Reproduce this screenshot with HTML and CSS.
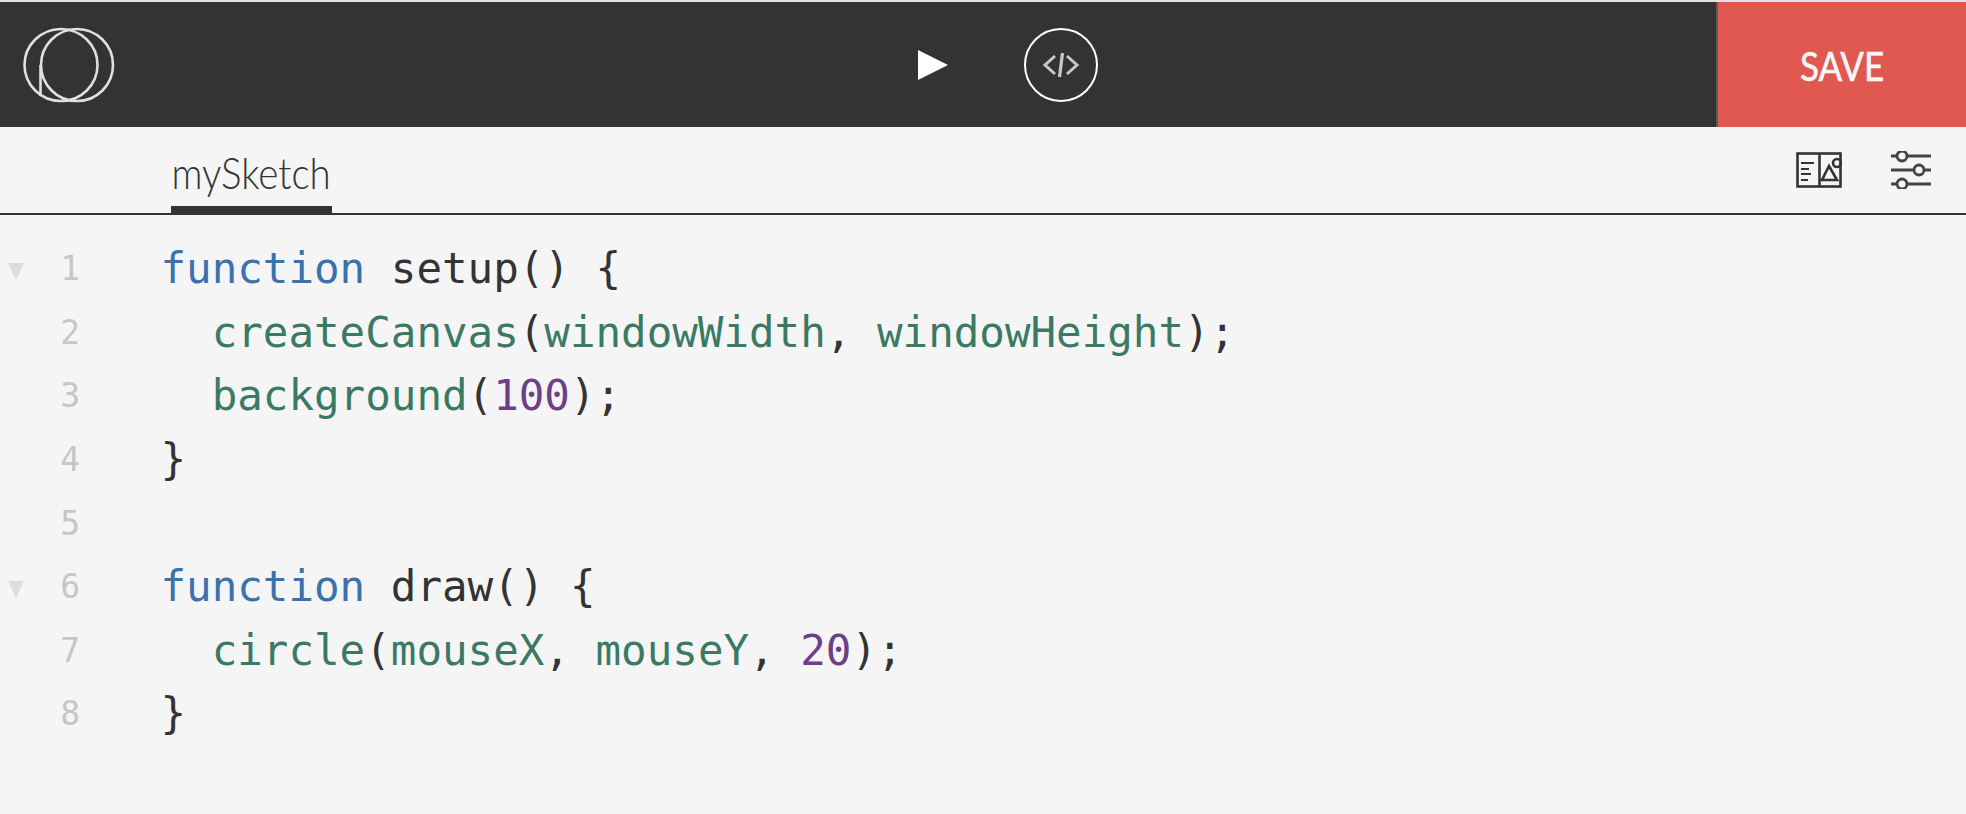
FILE: index.html
```html
<!DOCTYPE html>
<html lang="en">
<head>
<meta charset="utf-8">
<title>mySketch</title>
<link rel="stylesheet" href="styles.css">
</head>
<body>
<header class="topbar">
  <svg class="logo" width="92" height="76" viewBox="0 0 92 76" fill="none" stroke="#e0e0e0" stroke-width="2.6">
    <ellipse cx="38" cy="38" rx="36.5" ry="36"/>
    <ellipse cx="54" cy="38" rx="36" ry="36"/>
    <path d="M17.5 69V38"/>
  </svg>
  <div class="controls">
    <svg class="play" width="30" height="30" viewBox="0 0 30 30"><path d="M0 0L30 15L0 30Z" fill="#fff"/></svg>
    <div class="code-btn">
      <svg width="38" height="26" viewBox="0 0 38 26" fill="none" stroke="#c8c8c8" stroke-width="3">
        <path d="M13 4L3 13L13 22M25 4L35 13L25 22"/>
        <path d="M20.5 1L17.5 25" stroke-width="3.2"/>
      </svg>
    </div>
  </div>
  <button class="save"><span class="squeeze">SAVE</span></button>
</header>
<nav class="tabs">
  <div class="tab"><span class="squeeze">mySketch</span></div>
  <div class="tab-icons">
    <svg width="46" height="36" viewBox="0 0 46 36" fill="none" stroke="#333" stroke-width="2.6">
      <rect x="1.5" y="1.5" width="43" height="33"/>
      <path d="M23.5 1.5V34.5"/>
      <path d="M5 11H18M5 17H13M5 22H15M5 28H12" stroke-width="2.2"/>
      <path d="M33 14L41 28H26Z"/>
      <circle cx="41" cy="11" r="4"/>
    </svg>
    <svg width="40" height="38" viewBox="0 0 40 38" fill="none" stroke="#444" stroke-width="2.8">
      <path d="M0 5H6M16 5H40M0 19H23M33 19H40M0 33H6M16 33H40"/>
      <circle cx="11" cy="5" r="5"/>
      <circle cx="28" cy="19" r="5"/>
      <circle cx="11" cy="33" r="5"/>
    </svg>
  </div>
</nav>
<main class="editor">
  <div class="line"><span class="fold"></span><span class="num">1</span><code><span class="kw">function</span> setup() {</code></div>
  <div class="line"><span class="nofold"></span><span class="num">2</span><code>  <span class="fn">createCanvas</span>(<span class="fn">windowWidth</span>, <span class="fn">windowHeight</span>);</code></div>
  <div class="line"><span class="nofold"></span><span class="num">3</span><code>  <span class="fn">background</span>(<span class="nm">100</span>);</code></div>
  <div class="line"><span class="nofold"></span><span class="num">4</span><code>}</code></div>
  <div class="line"><span class="nofold"></span><span class="num">5</span><code></code></div>
  <div class="line"><span class="fold"></span><span class="num">6</span><code><span class="kw">function</span> draw() {</code></div>
  <div class="line"><span class="nofold"></span><span class="num">7</span><code>  <span class="fn">circle</span>(<span class="fn">mouseX</span>, <span class="fn">mouseY</span>, <span class="nm">20</span>);</code></div>
  <div class="line"><span class="nofold"></span><span class="num">8</span><code>}</code></div>
</main>
</body>
</html>
```
FILE: styles.css
```css
html, body {
  margin: 0;
  height: 100%;
  background: #f5f5f5;
  overflow: hidden;
}
body {
  border-top: 2px solid #e2e2e2;
  box-sizing: border-box;
}
.topbar {
  height: 125px;
  background: #333;
  display: grid;
  grid-template-columns: 1fr auto 1fr;
  align-items: center;
}
.logo {
  margin-left: 23px;
}
.controls {
  display: flex;
  align-items: center;
  gap: 76px;
  margin-left: 49px;
}
.play {
  display: block;
}
.code-btn {
  width: 74px;
  height: 74px;
  box-sizing: border-box;
  border: 2px solid #fff;
  border-radius: 50%;
  display: flex;
  align-items: center;
  justify-content: center;
}
.save {
  justify-self: end;
  width: 250px;
  height: 125px;
  border: 0;
  border-left: 2px solid #5a5a5a;
  background: #e15851;
  color: #f7f7f7;
  font: 400 40px "Lato", sans-serif;
  -webkit-text-stroke: 0.6px #f7f7f7;
  padding: 2px 0 0;
}
.squeeze {
  display: inline-block;
  transform: scaleX(0.875);
}
.tabs {
  height: 86px;
  border-bottom: 2px solid #333;
  display: flex;
  justify-content: space-between;
  align-items: flex-end;
  padding: 0 35px 0 171px;
}
.tab {
  width: 161px;
  height: 66px;
  box-sizing: border-box;
  border-bottom: 7px solid #333;
  color: #333;
  font: 300 44px/50px "Lato", sans-serif;
  text-align: center;
  white-space: nowrap;
  display: flex;
  justify-content: center;
}
.tab-icons {
  display: flex;
  gap: 49px;
  align-self: center;
  align-items: center;
}
.editor {
  padding-top: 22.3px;
}
.line {
  display: flex;
  align-items: center;
  height: 63.6px;
  font: 42.5px/63.6px "DejaVu Sans Mono", monospace;
  color: #333;
}
.fold {
  width: 0;
  height: 0;
  margin-left: 8px;
  margin-top: 5px;
  border-left: 8px solid transparent;
  border-right: 8px solid transparent;
  border-top: 17px solid #ddd;
}
.nofold {
  width: 16px;
  margin-left: 8px;
}
.num {
  width: 56px;
  text-align: right;
  color: #c6c6c6;
  font-size: 33px;
}
code {
  font: inherit;
  white-space: pre;
  margin-left: 80.5px;
}
.kw { color: #3a72ad; }
.fn { color: #3a7a64; }
.nm { color: #6c4089; }
```
